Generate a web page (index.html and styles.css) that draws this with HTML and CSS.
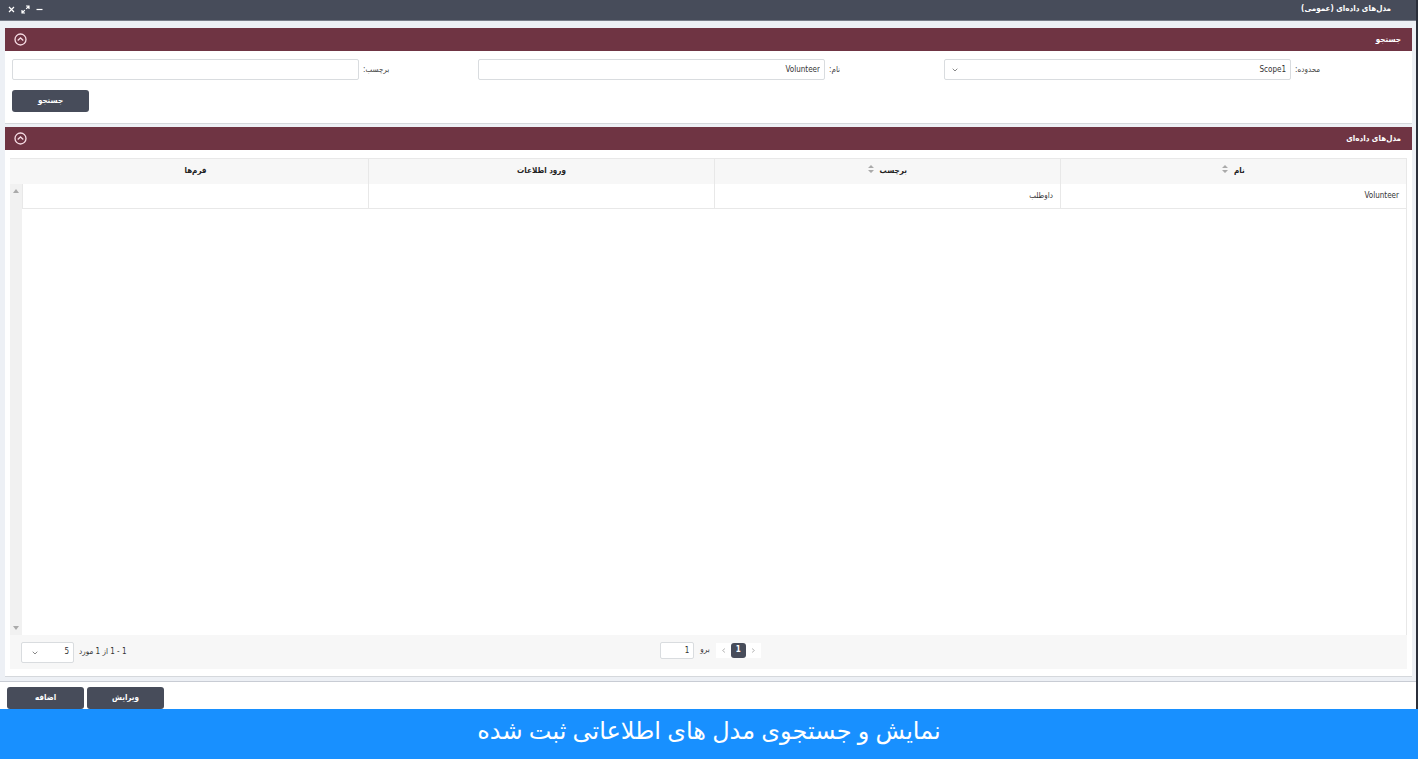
FILE: index.html
```html
<!DOCTYPE html>
<html lang="fa" dir="rtl">
<head>
<meta charset="utf-8">
<meta name="viewport" content="width=device-width, initial-scale=1">
<title>مدل‌های داده‌ای (عمومی)</title>
<link rel="stylesheet" href="styles.css">
</head>
<body>
<div class="window">
  <header class="titlebar">
    <h1 class="title">مدل‌های داده‌ای (عمومی)</h1>
    <div class="window-tools">
      <button class="tool" type="button" aria-label="کوچک کردن"><svg viewBox="0 0 9 9"><path d="M1.5 4.5h6"/></svg></button>
      <button class="tool" type="button" aria-label="بزرگ کردن"><svg viewBox="0 0 9 9"><path d="M5 1h3v3M8 1 5.2 3.8M4 8H1V5M1 8l2.8-2.8"/></svg></button>
      <button class="tool" type="button" aria-label="بستن"><svg viewBox="0 0 9 9"><path d="M2 2l5 5M7 2 2 7"/></svg></button>
    </div>
  </header>

  <main class="content">
    <section class="panel">
      <div class="panel-head">
        <h2 class="panel-title">جستجو</h2>
        <button class="collapse" type="button" aria-label="جمع کردن"><svg viewBox="0 0 13 13"><circle cx="6.5" cy="6.5" r="5.5"/><path d="M3.7 7.6 6.5 5l2.8 2.6"/></svg></button>
      </div>
      <form class="search">
        <div class="fields">
          <div class="field">
            <label class="label" for="scope">محدوده:</label>
            <div class="select-box">
              <select class="control" id="scope"><option>Scope1</option></select>
              <svg class="chevron" viewBox="0 0 6 4"><path d="M.7.7 3 3 5.3.7"/></svg>
            </div>
          </div>
          <div class="field">
            <label class="label" for="name">نام:</label>
            <input class="control" id="name" type="text" value="Volunteer">
          </div>
          <div class="field">
            <label class="label" for="tag">برچسب:</label>
            <input class="control" id="tag" type="text">
          </div>
        </div>
        <button class="button" type="button">جستجو</button>
      </form>
    </section>

    <section class="panel panel-grow">
      <div class="panel-head">
        <h2 class="panel-title">مدل‌های داده‌ای</h2>
        <button class="collapse" type="button" aria-label="جمع کردن"><svg viewBox="0 0 13 13"><circle cx="6.5" cy="6.5" r="5.5"/><path d="M3.7 7.6 6.5 5l2.8 2.6"/></svg></button>
      </div>
      <div class="grid">
        <div class="grid-view">
          <div class="grid-main">
            <table class="table">
              <thead>
                <tr>
                  <th>نام <svg class="sort" viewBox="0 0 6 8"><path d="M3 0 6 3H0zM3 8 0 5h6z"/></svg></th>
                  <th>برچسب <svg class="sort" viewBox="0 0 6 8"><path d="M3 0 6 3H0zM3 8 0 5h6z"/></svg></th>
                  <th>ورود اطلاعات</th>
                  <th>فرم‌ها</th>
                </tr>
              </thead>
              <tbody>
                <tr><td>Volunteer</td><td>داوطلب</td><td></td><td></td></tr>
              </tbody>
            </table>
          </div>
          <div class="scroll">
            <div class="scroll-head"></div>
            <div class="scroll-track">
              <svg class="arrow" viewBox="0 0 6 4"><path d="M3 0 6 4H0z"/></svg>
              <svg class="arrow" viewBox="0 0 6 4"><path d="M3 4 0 0h6z"/></svg>
            </div>
          </div>
        </div>
        <div class="pager">
          <div class="pager-nav">
            <div class="pages">
              <button class="page" type="button" aria-label="قبلی"><svg viewBox="0 0 5 5"><path d="M1 .5l2.5 2L1 4.5"/></svg></button>
              <button class="page page-current" type="button">1</button>
              <button class="page" type="button" aria-label="بعدی"><svg viewBox="0 0 5 5"><path d="M4 .5l-2.5 2L4 4.5"/></svg></button>
            </div>
            <label for="goto">برو</label>
            <input class="control goto" id="goto" type="text" value="1">
          </div>
          <div class="pager-size">
            <label for="size">1 - 1 از 1 مورد</label>
            <div class="select-box size-box">
              <select class="control" id="size"><option>5</option></select>
              <svg class="chevron" viewBox="0 0 6 4"><path d="M.7.7 3 3 5.3.7"/></svg>
            </div>
          </div>
        </div>
      </div>
    </section>
  </main>

  <footer class="actions">
    <button class="button" type="button">ویرایش</button>
    <button class="button" type="button">اضافه</button>
  </footer>
</div>
<p class="caption">نمایش و جستجوی مدل های اطلاعاتی ثبت شده</p>
</body>
</html>
```
FILE: styles.css
```css
* { box-sizing: border-box; }

body {
  margin: 0;
  min-height: 100vh;
  display: flex;
  flex-direction: column;
  font-family: "DejaVu Sans Condensed", "DejaVu Sans", sans-serif;
  font-size: 8px;
  line-height: 12px;
  color: #333;
  background: #fff;
}

button, input, select { font: inherit; color: inherit; }
button { border: 0; padding: 0; background: none; }
h1, h2, p { margin: 0; }
svg { display: block; fill: none; stroke: currentColor; }

.window {
  flex: 1;
  display: flex;
  flex-direction: column;
  border-right: 2px solid #2b2f3a;
}

.titlebar {
  display: flex;
  justify-content: space-between;
  align-items: center;
  height: 21px;
  padding: 0 25px 2px 7px;
  background: #474c5a;
  border-bottom: 1px solid #777c88;
  color: #fff;
}
.title { font-size: 8px; font-weight: bold; }
.window-tools { display: flex; gap: 5px; }
.tool svg { width: 9px; height: 9px; stroke-width: 1.2; }

.content {
  flex: 1;
  display: flex;
  flex-direction: column;
  gap: 3px;
  padding: 7px 4px 4px 5px;
  background: #edf0f5;
}

.panel {
  display: flex;
  flex-direction: column;
  background: #fff;
  border-bottom: 1px solid #d5d8dc;
}
.panel-grow { flex: 1; }
.panel-head {
  display: flex;
  justify-content: space-between;
  align-items: center;
  height: 23px;
  padding: 0 11px 0 9px;
  background: #6f3443;
  color: #fff;
}
.panel-title { font-size: 8px; font-weight: bold; }
.collapse { color: #f6dce4; }
.collapse svg { width: 13px; height: 13px; stroke-width: 1.3; }

.search {
  display: flex;
  flex-direction: column;
  gap: 10px;
  padding: 8px 2px 11px 7px;
}
.fields { display: grid; grid-template-columns: repeat(3, 1fr); }
.field { display: grid; grid-template-columns: 119px 1fr; align-items: center; }
.label { padding-left: 4px; text-align: left; color: #444; }
.search .button { align-self: flex-end; }

.control {
  width: 100%;
  height: 21px;
  padding: 0 4px;
  border: 1px solid #d9dcdf;
  border-radius: 2px;
  background: #fff;
  appearance: none;
  outline: 0;
}
.select-box { position: relative; }
.chevron {
  position: absolute;
  left: 8px;
  top: 9px;
  width: 6px;
  height: 4px;
  color: #888;
}

.button {
  width: 77px;
  height: 22px;
  border-radius: 3px;
  background: #474c5a;
  color: #fff;
  font-weight: bold;
}

.grid {
  flex: 1;
  display: flex;
  flex-direction: column;
  padding: 8px 5px 7px 5px;
}
.grid-view {
  flex: 1;
  display: flex;
  border-top: 1px solid #e8e8e8;
  border-right: 1px solid #e8e8e8;
}
.grid-main { flex: 1; }
.table { width: 100%; table-layout: fixed; border-collapse: separate; border-spacing: 0; }
.table th {
  height: 25px;
  padding: 0 0 2px;
  background: #f7f7f7;
  color: #222;
  border-left: 1px solid #e8e8e8;
}
.table th:last-child { border-left-color: #f7f7f7; }
.table td {
  height: 25px;
  padding: 0 7px;
  border-left: 1px solid #e8e8e8;
  border-bottom: 1px solid #e8e8e8;
}
.sort {
  display: inline-block;
  width: 6px;
  height: 8px;
  margin-right: 3px;
  vertical-align: 0;
  fill: #aaa;
  stroke: none;
}
.scroll { width: 12px; display: flex; flex-direction: column; }
.scroll-head { height: 25px; background: #f7f7f7; }
.scroll-track {
  flex: 1;
  display: flex;
  flex-direction: column;
  justify-content: space-between;
  align-items: center;
  padding: 5px 0;
  background: #f1f1f1;
}
.arrow { width: 6px; height: 4px; fill: #aaa; stroke: none; }

.pager {
  display: grid;
  grid-template-columns: 1fr auto 1fr;
  align-items: center;
  height: 34px;
  padding: 0 7px 0 11px;
  background: #f7f7f7;
}
.pager-nav {
  grid-column: 2;
  display: flex;
  align-items: center;
  gap: 6px;
  padding-bottom: 4px;
}
.pages { display: flex; background: #fff; }
.page {
  display: flex;
  align-items: center;
  justify-content: center;
  width: 15px;
  height: 15px;
  color: #bbb;
}
.page svg { width: 5px; height: 5px; }
.page-current { border-radius: 3px; background: #474c5a; color: #fff; font-weight: bold; }
.goto { width: 34px; height: 17px; }
.pager-size { display: flex; justify-content: flex-end; align-items: center; gap: 5px; }
.size-box { width: 53px; }
.size-box .chevron { left: 11px; }

.actions {
  display: flex;
  justify-content: flex-end;
  gap: 3px;
  padding: 5px 7px 0;
  border-top: 1px solid #c8ccd4;
  background: #fff;
}

.caption {
  height: 50px;
  background: #1890ff;
  color: #fff;
  font-family: "Noto Sans", "DejaVu Sans", sans-serif;
  font-size: 24px;
  line-height: 42px;
  text-align: center;
}
```
